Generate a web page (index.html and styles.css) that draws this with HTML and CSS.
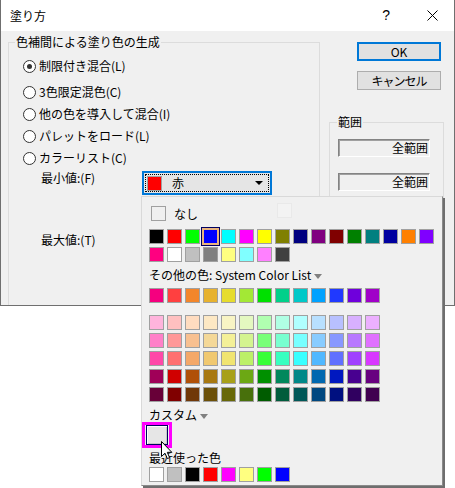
FILE: index.html
```html
<!DOCTYPE html>
<html lang="ja">
<head>
  <meta charset="UTF-8" />
  <meta name="viewport" content="width=device-width, initial-scale=1.0"/>
  <title>塗り方</title>
  <link rel="stylesheet" href="styles.css">
</head>
<body>
  <div class="dialog">
    <div class="titlebar">
      <span class="title">塗り方</span>
      <span class="help">?</span>
      <svg class="close" width="11" height="11" viewBox="0 0 11 11">
        <path d="M0.5 0.5 L10.5 10.5 M10.5 0.5 L0.5 10.5" stroke="#000" stroke-width="1" fill="none"/>
      </svg>
    </div>

    <div class="client">
      <fieldset class="group group-main">
        <legend>色補間による塗り色の生成</legend>
        <div class="radio-row first"><span class="radio checked"></span>制限付き混合(L)</div>
        <div class="radio-row"><span class="radio"></span>3色限定混色(C)</div>
        <div class="radio-row"><span class="radio"></span>他の色を導入して混合(I)</div>
        <div class="radio-row"><span class="radio"></span>パレットをロード(L)</div>
        <div class="radio-row"><span class="radio"></span>カラーリスト(C)</div>

        <div class="value-row">
          <span class="value-label">最小値:(F)</span>
          <div class="combo">
            <div class="combo-focus">
              <span class="swatch combo-swatch"></span>
              <span class="combo-text">赤</span>
              <span class="combo-arrow"></span>
            </div>
          </div>
        </div>
        <div class="value-row max-row">
          <span class="value-label">最大値:(T)</span>
        </div>
      </fieldset>

      <div class="side">
        <button class="btn btn-default">OK</button>
        <button class="btn btn-cancel">キャンセル</button>
        <fieldset class="group group-range">
          <legend>範囲</legend>
          <div class="range-field">全範囲</div>
          <div class="range-field second">全範囲</div>
        </fieldset>
      </div>
    </div>
  </div>

  <div class="color-popup">
    <div class="none-row">
      <span class="none-box"></span>
      <span class="none-label">なし</span>
      <span class="picker-btn"></span>
    </div>
    <div class="swatch-row basic" id="basic1"></div>
    <div class="swatch-row basic-2" id="basic2"></div>

    <div class="popup-label other-label">その他の色: System Color List<span class="mini-arrow"></span></div>
    <div class="swatch-row system-row" id="system"></div>

    <div class="swatch-grid" id="grid"></div>

    <div class="popup-label custom-label">カスタム<span class="mini-arrow"></span></div>
    <div class="custom-box"><div class="custom-inner"></div></div>

    <div class="popup-label recent-label">最近使った色</div>
    <div class="swatch-row recent-row" id="recent"></div>

    <svg class="cursor" width="12" height="19" viewBox="0 0 12 19">
      <path d="M0.5 0.5 L0.5 15.5 L4 12.2 L6.4 17.6 L8.6 16.6 L6.3 11.3 L10.8 11.3 Z" fill="#fff" stroke="#000" stroke-width="1"/>
    </svg>
  </div>

  <script>
    const palette = {
      basic1: ['#000000', '#ff0000', '#00ff00', '#0000ff', '#00ffff', '#ff00ff', '#ffff00', '#808000',
               '#000080', '#800080', '#800000', '#008000', '#008080', '#0000a0', '#ff8000', '#8000ff'],
      basic2: ['#ff0080', '#ffffff', '#c0c0c0', '#808080', '#ffff80', '#80ffff', '#ff80ff', '#404040'],
      system: ['#f5007f', '#ff4040', '#f3862b', '#e7b22f', '#e6dc2e', '#a3e835', '#00e000',
               '#00d08a', '#00c8c8', '#00a2ff', '#2039ff', '#6f00dc', '#a000c8'],
      grid: [
        ['#ffb4dc', '#ffc0c0', '#ffdcc0', '#fde8c4', '#f8f4c4', '#e4f8c0', '#b0ffb0', '#b0ffe4', '#b0ffff', '#b8e0ff', '#b8c0ff', '#d8b0ff', '#ecb0ff'],
        ['#ff80c8', '#ff9898', '#f8c090', '#f4d898', '#f4f098', '#d4f490', '#78ff78', '#78ffd0', '#78ffff', '#88ccff', '#8898ff', '#b878ff', '#e070ff'],
        ['#ff48a8', '#ff7070', '#f4a868', '#f0c870', '#f0e470', '#bcf068', '#38ff38', '#38ffc0', '#38ffff', '#50b8ff', '#6070ff', '#a040ff', '#d838ff'],
        ['#a00058', '#d00000', '#b05008', '#a87810', '#a8a018', '#6ca814', '#009000', '#00885c', '#008888', '#0068b0', '#0018c0', '#480090', '#680080'],
        ['#680038', '#800000', '#703808', '#6c5008', '#686808', '#48700c', '#005c00', '#005c3c', '#005858', '#004880', '#001080', '#300060', '#400050']
      ],
      recent: ['#ffffff', '#c0c0c0', '#000000', '#ff0000', '#ff00ff', '#ffff80', '#00ff00', '#0000ff']
    };

    function fillRow(row, colors, selected) {
      colors.forEach((color, i) => {
        const sw = document.createElement('span');
        sw.className = i === selected ? 'swatch selected' : 'swatch';
        sw.style.background = color;
        row.appendChild(sw);
      });
    }

    fillRow(document.getElementById('basic1'), palette.basic1, 3);
    fillRow(document.getElementById('basic2'), palette.basic2);
    fillRow(document.getElementById('system'), palette.system);
    fillRow(document.getElementById('recent'), palette.recent);

    const grid = document.getElementById('grid');
    palette.grid.forEach(colors => {
      const row = document.createElement('div');
      row.className = 'swatch-row';
      fillRow(row, colors);
      grid.appendChild(row);
    });
  </script>
</body>
</html>
```

FILE: styles.css
```css
body {
  margin: 0;
  background-color: #fff;
  font-family: "Noto Sans CJK JP", "Liberation Sans", sans-serif;
  font-size: 12px;
  color: #000;
}

.dialog {
  width: 455px;
  height: 306px;
  box-sizing: border-box;
  border: 1px solid #6f6f6f;
  border-top: none;
  overflow: hidden;
  background-color: #f0f0f0;
}

.titlebar {
  height: 31px;
  background-color: #fff;
  display: flex;
  align-items: center;
  padding-left: 9px;
}

.title {
  font-size: 12px;
  line-height: 14px;
}

.help {
  margin-left: auto;
  font-family: "Liberation Sans", sans-serif;
  font-size: 14px;
  line-height: 14px;
  margin-top: -1px;
}

.close {
  margin-left: 37px;
  margin-right: 16px;
}

.client {
  display: flex;
  align-items: flex-start;
  height: 274px;
  padding-left: 7px;
}

.group {
  margin: 0;
  border: 1px solid #dcdcdc;
  box-sizing: border-box;
  min-width: 0;
}

.group legend {
  line-height: 14px;
  padding: 0 1px;
}

.group-main {
  width: 312px;
  height: 300px;
  margin-top: 4px;
  padding: 6px 0 0 14px;
}

.group-main legend {
  margin-left: -8px;
}

.radio-row {
  display: flex;
  align-items: center;
  height: 22px;
  line-height: 14px;
}

.radio-row.first {
  margin-bottom: 4px;
}

.radio {
  position: relative;
  width: 13px;
  height: 13px;
  box-sizing: border-box;
  border: 1px solid #333;
  border-radius: 50%;
  background-color: #fff;
  margin-right: 3px;
  flex: none;
}

.radio.checked::after {
  content: "";
  position: absolute;
  left: 3px;
  top: 3px;
  width: 5px;
  height: 5px;
  border-radius: 50%;
  background-color: #333;
}

.value-row {
  display: flex;
  align-items: flex-start;
  margin-top: 2px;
}

.value-label {
  width: 101px;
  margin-left: 18px;
  line-height: 14px;
}

.max-row {
  margin-top: 38px;
}

.combo {
  width: 130px;
  height: 24px;
  box-sizing: border-box;
  border: 2px solid #0078d7;
  background-color: #e5e5e5;
  padding: 1px;
}

.combo-focus {
  height: 100%;
  box-sizing: border-box;
  border: 1px dotted #000;
  display: flex;
  align-items: center;
  padding-left: 1px;
}

.combo-swatch {
  background-color: #ff0000;
}

.combo-text {
  margin-left: 10px;
  line-height: 14px;
}

.combo-arrow {
  margin-left: auto;
  margin-right: 5px;
  width: 0;
  height: 0;
  border-left: 4px solid transparent;
  border-right: 4px solid transparent;
  border-top: 4px solid #000;
}

.side {
  width: 115px;
  margin-left: 9px;
  display: flex;
  flex-direction: column;
}

.btn {
  width: 84px;
  height: 19px;
  margin: 10px 0 0 28px;
  padding: 0;
  box-sizing: border-box;
  border: 1px solid #adadad;
  background-color: #e1e1e1;
  font-family: inherit;
  font-size: 12px;
  line-height: 14px;
  color: #000;
}

.btn-default {
  margin-top: 11px;
  border: 2px solid #0078d7;
}

.btn-cancel {
  letter-spacing: -1px;
}

.group-range {
  width: 115px;
  height: 200px;
  margin-top: 25px;
  padding: 10px 0 0 8px;
}

.group-range legend {
  margin-left: -1px;
}

.range-field {
  width: 92px;
  height: 18px;
  box-sizing: border-box;
  border: 1px solid;
  border-color: #838383 #fff #fff #838383;
  box-shadow: inset 1px 1px 0 #a0a0a0;
  text-align: right;
  line-height: 16px;
  padding-right: 1px;
}

.range-field.second {
  margin-top: 16px;
}

.color-popup {
  position: absolute;
  left: 141px;
  top: 196px;
  width: 302px;
  height: 290px;
  box-sizing: border-box;
  border: 1px solid #d9d9d9;
  border-right-color: #8a8a8a;
  border-bottom-color: #8a8a8a;
  box-shadow: 2px 2px 0 #6e6e6e;
  background-color: #f0f0f0;
  padding: 9px 0 0 7px;
}

.none-row {
  display: flex;
  align-items: center;
  height: 15px;
}

.none-box {
  width: 15px;
  height: 15px;
  box-sizing: border-box;
  border: 1px solid #a0a0a0;
  margin-left: 2px;
}

.none-label {
  width: 103px;
  margin-left: 8px;
  line-height: 14px;
}

.picker-btn {
  width: 15px;
  height: 15px;
  box-sizing: border-box;
  border: 1px solid #e9e9e9;
  background-color: #f3f3f3;
  margin-top: -6px;
}

.swatch-row {
  display: flex;
  gap: 3px;
}

.swatch {
  width: 15px;
  height: 15px;
  box-sizing: border-box;
  border: 1px solid #a0a0a0;
  flex: none;
}

.swatch.selected {
  width: 19px;
  height: 19px;
  margin: -2px;
  border: 1px solid #000060;
  box-shadow: inset 0 0 0 2px #e8b47e;
}

.basic {
  margin-top: 8px;
}

.basic-2 {
  margin-top: 3px;
}

.popup-label {
  display: flex;
  align-items: center;
  line-height: 14px;
}

.other-label {
  margin-top: 5px;
  height: 16px;
}

.mini-arrow {
  width: 0;
  height: 0;
  margin-left: 3px;
  margin-top: 2px;
  border-left: 4px solid transparent;
  border-right: 4px solid transparent;
  border-top: 5px solid #808080;
}

.system-row {
  margin-top: 5px;
}

.swatch-grid {
  display: flex;
  flex-direction: column;
  gap: 3px;
  margin-top: 12px;
}

.custom-label {
  margin-top: 6px;
  height: 14px;
}

.custom-box {
  width: 30px;
  height: 26px;
  box-sizing: border-box;
  border: 3px solid #ff00ff;
  margin-left: -7px;
  padding: 0 1px 0 1px;
}

.custom-inner {
  height: 100%;
  box-sizing: border-box;
  border: 1px solid #000060;
  background-color: #e6e6e6;
  box-shadow: inset 1px 1px 0 #fff, inset -1px -1px 0 #c8c8c8;
}

.recent-label {
  margin-top: 3px;
  height: 14px;
}

.recent-row {
  margin-top: 2px;
}

.cursor {
  position: absolute;
  left: 19px;
  top: 244px;
}
```
